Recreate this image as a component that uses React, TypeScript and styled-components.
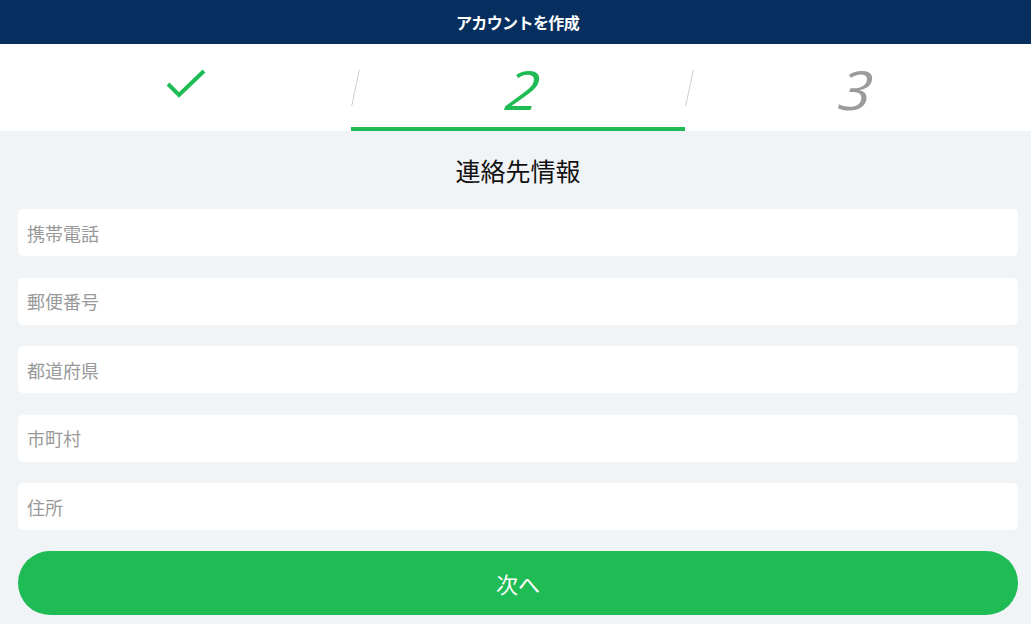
import React from 'react';
import styled, { createGlobalStyle } from 'styled-components';

const GlobalStyle = createGlobalStyle`
  html, body {
    margin: 0;
    padding: 0;
    background: #f1f4f7;
    font-family: "Noto Sans", "Noto Sans CJK JP", sans-serif;
  }
  * { box-sizing: border-box; }
`;

const Page = styled.div`
  width: 100%;
  min-height: 624px;
  background: #f1f4f7;
  display: flex;
  flex-direction: column;
`;

const Header = styled.header`
  height: 44px;
  background: #062f5f;
  color: #fff;
  display: flex;
  align-items: center;
  justify-content: center;
  padding-left: 4px;
  font-family: "Noto Sans CJK JP", sans-serif;
  font-weight: 700;
  font-size: 16px;
  letter-spacing: -0.6px;
`;

const Steps = styled.nav`
  height: 87px;
  background: #fff;
  display: flex;
  align-items: stretch;
`;

const Step = styled.div<{ $width?: number; $shift?: number; $active?: boolean }>`
  position: relative;
  flex: ${({ $width }) => ($width ? `0 0 ${$width}px` : '1 1 auto')};
  display: flex;
  align-items: center;
  justify-content: center;
  padding-left: ${({ $shift }) => ($shift && $shift > 0 ? $shift : 0)}px;
  padding-right: ${({ $shift }) => ($shift && $shift < 0 ? -$shift : 0)}px;
  border-bottom: 4px solid ${({ $active }) => ($active ? '#1fbb55' : 'transparent')};
`;

const Separator = styled.span`
  position: absolute;
  left: 4px;
  top: 26px;
  width: 1px;
  height: 36px;
  background: #cfcfcf;
  transform: skewX(-12deg);
`;

const Number = styled.span<{ $done?: boolean }>`
  display: inline-block;
  font-family: "Open Sans", "Noto Sans", sans-serif;
  font-style: italic;
  font-size: 54px;
  line-height: 1;
  margin-top: 6px;
  transform: scaleX(1.12) skewX(-6deg);
  color: ${({ $done }) => ($done ? '#1fbb55' : '#9b9b9b')};
`;

const Check = styled.svg`
  width: 40px;
  height: 30px;
  margin-top: -4px;
`;

const Main = styled.main`
  padding: 22px 13px 0 18px;
  display: flex;
  flex-direction: column;
`;

const Title = styled.h1`
  margin: 0 0 22px;
  text-align: center;
  font-family: "Noto Sans CJK JP", sans-serif;
  font-weight: 400;
  font-size: 25px;
  line-height: 34px;
  color: #111;
`;

const Fields = styled.div`
  display: flex;
  flex-direction: column;
  gap: 21.5px;
`;

const Input = styled.input`
  width: 100%;
  height: 47px;
  border: none;
  border-radius: 5px;
  background: #fff;
  padding: 0 9px;
  font-family: "Noto Sans CJK JP", sans-serif;
  font-size: 18px;
  color: #333;
  outline: none;
  &::placeholder {
    color: #999;
  }
`;

const NextButton = styled.button`
  margin-top: 21px;
  width: 100%;
  height: 64px;
  border: none;
  border-radius: 32px;
  background: #1fbb55;
  color: #fff;
  font-family: "Noto Sans CJK JP", sans-serif;
  font-size: 22px;
  cursor: pointer;
`;

const fields = ['携帯電話', '郵便番号', '都道府県', '市町村', '住所'];

const App: React.FC = () => (
  <Page>
    <GlobalStyle />
    <Header>アカウントを作成</Header>
    <Steps>
      <Step $width={351} $shift={20}>
        <Check viewBox="0 0 40 30">
          <path d="M2 15 L13 26 L38 2" fill="none" stroke="#1fbb55" strokeWidth="4" />
        </Check>
      </Step>
      <Step $width={334} $shift={9} $active>
        <Separator />
        <Number $done>2</Number>
      </Step>
      <Step $shift={-4}>
        <Separator />
        <Number>3</Number>
      </Step>
    </Steps>
    <Main>
      <Title>連絡先情報</Title>
      <Fields>
        {fields.map((f) => (
          <Input key={f} placeholder={f} />
        ))}
      </Fields>
      <NextButton>次へ</NextButton>
    </Main>
  </Page>
);

export default App;
